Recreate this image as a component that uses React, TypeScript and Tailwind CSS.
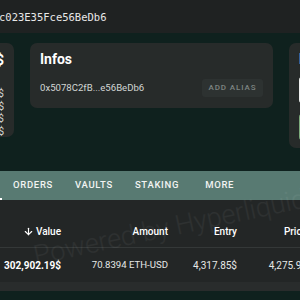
import { ArrowDown } from 'lucide-react'

const tabs = ['ORDERS', 'VAULTS', 'STAKING', 'MORE']

const balances = ['0.00$', '302,902.19$', '0.00$', '302,902.19$']

function InfosCard() {
  return (
    <div className="ml-[16px] w-[243px] h-[65px] shrink-0 rounded-[7px] bg-[#272b2a] pl-[10px] pr-[10px] pt-[8px]">
      <h3 className="text-[14px] font-bold text-white leading-[16px]">Infos</h3>
      <div className="flex items-center justify-between mt-[12px]">
        <span className="text-[9.6px] text-[#d2d6d4]">0x5078C2fB...e56BeDb6</span>
        <button className="h-[18px] w-[61px] rounded-[3px] bg-[#2d3231] text-[8px] font-medium tracking-[0.9px] text-[#7d8582]">
          ADD ALIAS
        </button>
      </div>
    </div>
  )
}

export default function App() {
  return (
    <div
      className="relative w-[300px] h-[300px] overflow-hidden bg-[#0f211e]"
      style={{ fontFamily: 'Roboto, "Liberation Sans", sans-serif' }}
    >
      {/* address bar */}
      <div className="h-[33px] bg-[#1f2222] flex items-center">
        <span
          className="ml-[-1px] text-[10.5px] text-[#e8e8e8] whitespace-nowrap pt-[3px]"
          style={{ fontFamily: '"DejaVu Sans Mono", monospace' }}
        >
          c023E35Fce56BeDb6
        </span>
      </div>

      {/* cards */}
      <div className="flex items-start mt-[10px]">
        <div className="ml-[-60px] w-[74px] h-[94px] shrink-0 rounded-[7px] bg-[#272b2a] pr-[10px] pt-[9px] text-right">
          <div className="text-[14px] font-bold text-white leading-[16px]">0$</div>
          <div className="mt-[20px] flex flex-col gap-[0.7px] text-[10px] text-[#d2d6d4] leading-[12px]">
            {balances.map((b, i) => (
              <span key={i}>{b}</span>
            ))}
          </div>
        </div>
        <InfosCard />
        <div className="ml-[16px] w-[60px] h-[105px] shrink-0 rounded-[7px] bg-[#272b2a] pl-[10px] pt-[8px]">
          <h3 className="text-[14px] font-bold text-white leading-[16px]">Deposit</h3>
          <div className="mt-[10px] h-[26px] rounded-[3px] bg-[#eef0ef]" />
          <div className="mt-[11px] h-[26px] rounded-[3px] bg-[#7dab7c]" />
        </div>
      </div>

      {/* tabs */}
      <div className="mt-[23px] h-[29px] bg-[#587a72] flex items-stretch">
        <div className="ml-[-40px] w-[42px] flex flex-col justify-end">
          <div className="h-[2px] bg-white" />
        </div>
        <div className="flex items-center gap-[22px] pl-[11px]">
          {tabs.map((t) => (
            <span key={t} className="text-[9.5px] font-medium tracking-[0.7px] text-[#f2f4f3] last:ml-[4px]">
              {t}
            </span>
          ))}
        </div>
      </div>

      {/* table */}
      <div className="bg-[#232626]">
        <div className="h-[48px] flex items-center pt-[16px] border-b border-[#343838] text-[10px] font-medium text-white">
          <div className="w-[61px] shrink-0 flex items-center justify-end gap-[2px]">
            <ArrowDown size={11} strokeWidth={2.5} />
            <span>Value</span>
          </div>
          <div className="w-[107px] shrink-0 text-right">Amount</div>
          <div className="w-[69px] shrink-0 text-right">Entry</div>
          <div className="w-[70px] shrink-0 text-right">Price</div>
        </div>
        <div className="h-[34px] flex items-center text-[10px] text-[#e6e8e7]">
          <div className="w-[61px] shrink-0 text-right font-bold text-white">302,902.19$</div>
          <div className="w-[107px] shrink-0 text-right text-[9.6px]">70.8394 ETH-USD</div>
          <div className="w-[69px] shrink-0 text-right">4,317.85$</div>
          <div className="w-[70px] shrink-0 text-right">4,275.9$</div>
        </div>
        <div className="h-[9px] bg-[#292c2c]" />
      </div>

      {/* watermark */}
      <div
        className="absolute left-[34px] top-[236px] origin-left -rotate-[12deg] text-[27px] font-light whitespace-nowrap text-white/[0.05] pointer-events-none"
      >
        Powered by Hyperliquid
      </div>
    </div>
  )
}
